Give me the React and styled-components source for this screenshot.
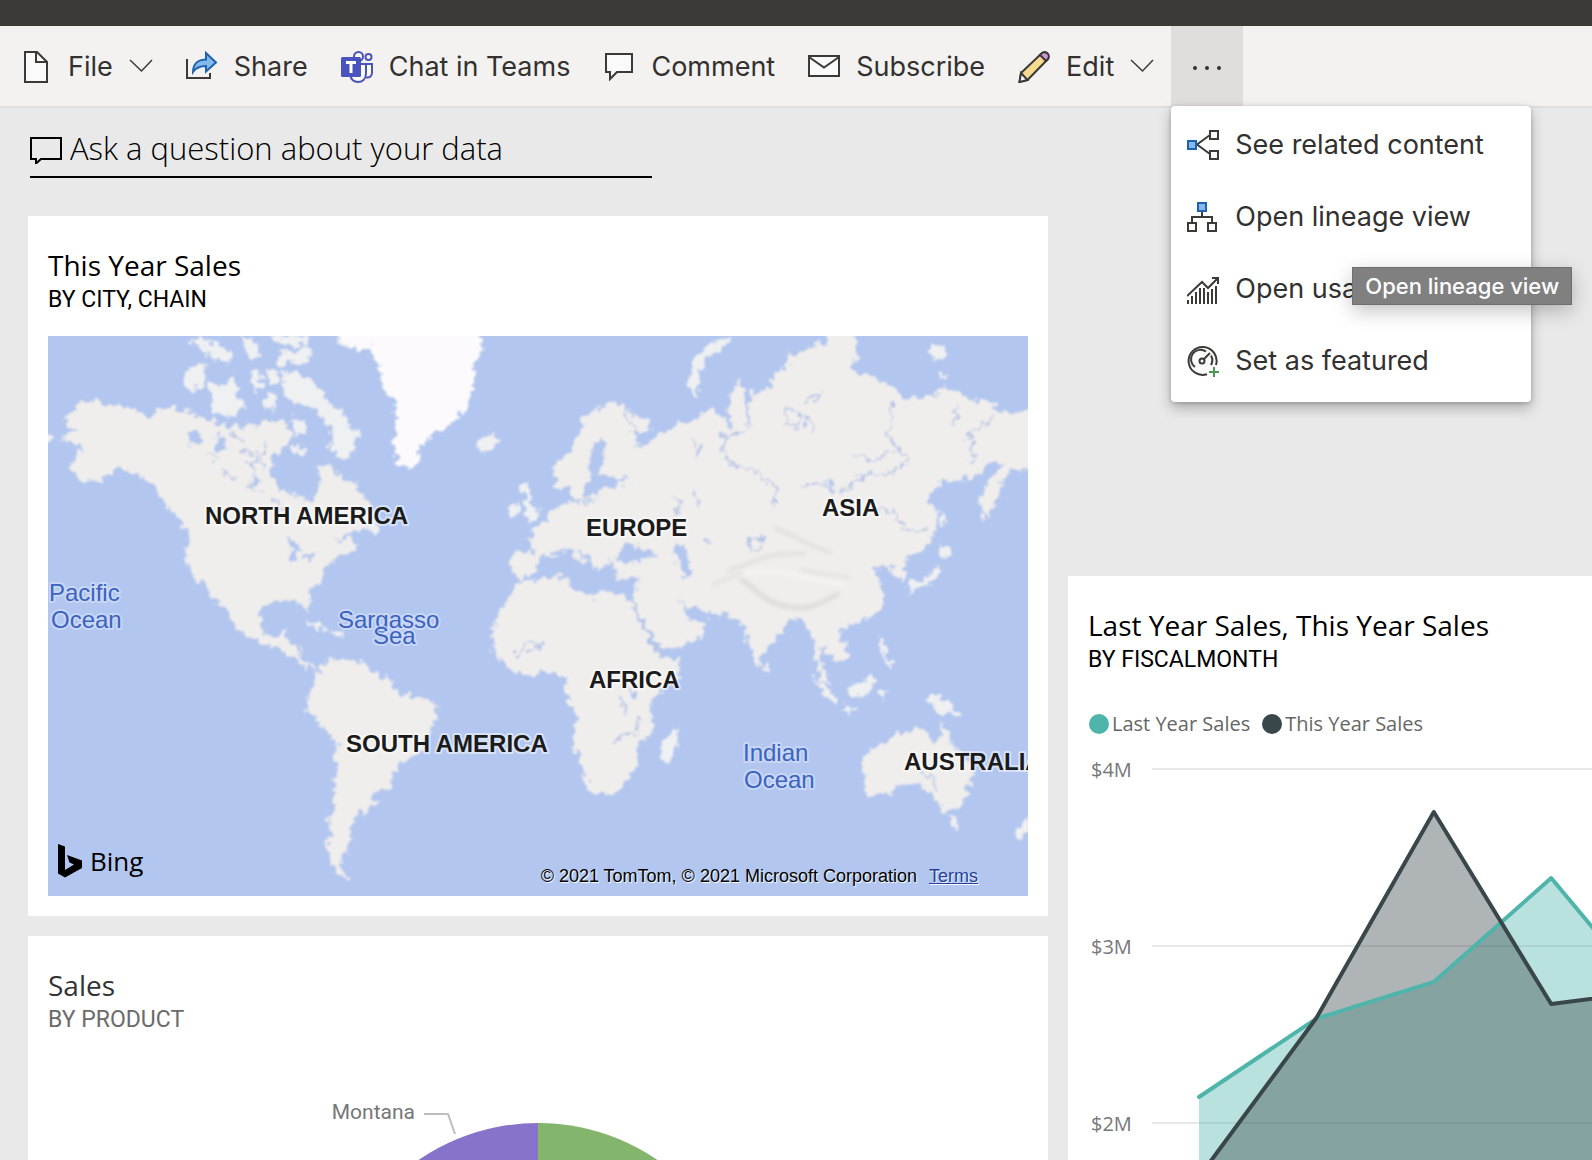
import React from "react";
import styled, { createGlobalStyle } from "styled-components";

const uiFont = `Inter, "Liberation Sans", sans-serif`;
const tileFont = `"Open Sans", "Noto Sans", sans-serif`;
const dinFont = `Roboto, "Liberation Sans", sans-serif`;
const mapFont = `"Liberation Sans", Arial, sans-serif`;

const GlobalStyle = createGlobalStyle`
  *, *::before, *::after { box-sizing: border-box; }
  body { margin: 0; background: #e9e9e9; font-family: ${uiFont}; }
  button { font: inherit; color: inherit; border: 0; background: none; padding: 0; cursor: pointer; }
`;

const Shell = styled.div`
  display: flex;
  flex-direction: column;
  height: 100vh;
  overflow: hidden;
`;

const TopBar = styled.header`
  flex: none;
  height: 26px;
  background: #3b3a37;
`;

const Toolbar = styled.nav`
  flex: none;
  display: flex;
  gap: 1px;
  height: 82px;
  padding-left: 4px;
  background: #f3f2f1;
  border-bottom: 2px solid #dedede;
`;

const ToolButton = styled.button`
  display: flex;
  align-items: center;
  gap: 16px;
  padding: 2px 16px 0;
  font-size: 27px;
  line-height: 36px;
  color: #323130;
  white-space: nowrap;
  svg { flex: none; }
`;

const MoreWrap = styled.div`
  position: relative;
  display: flex;
`;

const MoreButton = styled.button`
  display: flex;
  align-items: center;
  justify-content: center;
  width: 72px;
  padding-top: 4px;
  background: #dfdedd;
`;

const Menu = styled.div`
  position: absolute;
  top: 80px;
  left: 0;
  z-index: 2;
  width: 360px;
  padding: 3px 0 5px;
  background: #fff;
  border-radius: 4px;
  box-shadow: 0 6px 14px rgba(0, 0, 0, 0.26), 0 1px 4px rgba(0, 0, 0, 0.2);
`;

const MenuItem = styled.button`
  display: flex;
  align-items: center;
  gap: 16px;
  width: 100%;
  height: 72px;
  padding: 0 16px;
  overflow: hidden;
  font-size: 27px;
  line-height: 36px;
  color: #323130;
  white-space: nowrap;
`;

const Tooltip = styled.div`
  position: absolute;
  top: 241px;
  left: 181px;
  z-index: 3;
  width: 220px;
  height: 38px;
  border: 1px solid #6f6f6f;
  background: #808080;
  color: #fff;
  font-size: 22px;
  font-weight: 500;
  line-height: 36px;
  text-align: center;
  white-space: nowrap;
  box-shadow: 0 6px 20px rgba(0, 0, 0, 0.24);
`;

const Main = styled.main`
  flex: 1;
  min-height: 0;
  overflow: auto;
  scrollbar-width: none;
`;

const Question = styled.label`
  display: flex;
  align-items: center;
  gap: 8px;
  width: 622px;
  max-width: calc(100% - 60px);
  height: 70px;
  margin: 0 30px 38px;
  padding-top: 12px;
  border-bottom: 2px solid #000;
`;

const QuestionInput = styled.input`
  flex: 1;
  min-width: 0;
  padding: 0;
  border: 0;
  outline: 0;
  background: transparent;
  font-family: ${tileFont};
  font-size: 31px;
  font-weight: 300;
  line-height: 40px;
  color: #000;
  &::placeholder { color: #000; opacity: 1; }
`;

const Board = styled.div`
  display: grid;
  grid-template-columns: minmax(0, 255fr) minmax(0, 131fr);
  grid-auto-rows: 340px;
  gap: 20px;
  padding-left: 28px;
`;

const Tile = styled.section`
  grid-column: ${(p) => p.$column};
  grid-row: ${(p) => p.$row} / span 2;
  padding: 32px ${(p) => (p.$flush ? 0 : 20)}px 20px 20px;
  background: #fff;
  overflow: hidden;
`;

const TileHeader = styled.div`
  display: grid;
  gap: 4px;
  margin-bottom: 22px;
`;

const TileTitle = styled.h2`
  margin: 0;
  font-family: ${tileFont};
  font-size: 28px;
  font-weight: 400;
  line-height: 34px;
  color: ${(p) => (p.$muted ? "#333" : "#000")};
`;

const TileSubtitle = styled.p`
  margin: 0;
  font-family: ${dinFont};
  font-size: 23px;
  line-height: 28px;
  color: ${(p) => (p.$muted ? "#6b6b6b" : "#000")};
`;

const MapFrame = styled.div`
  position: relative;
  overflow: hidden;
  background: #b2c6ef;
`;

const Drawing = styled.svg`
  display: block;
  width: 100%;
  height: auto;
`;

const MapLabel = styled.text`
  font-family: ${mapFont};
  font-size: 24px;
  font-weight: ${(p) => (p.$water ? 400 : 700)};
  fill: ${(p) => (p.$water ? "#3b63bf" : "#1b1b1b")};
  stroke: ${(p) => (p.$water ? "rgba(215, 226, 250, 0.6)" : "rgba(255, 255, 255, 0.5)")};
  stroke-width: 4px;
  stroke-linejoin: round;
  paint-order: stroke;
`;

const BingMark = styled.div`
  position: absolute;
  left: 10px;
  bottom: 15px;
  display: flex;
  align-items: center;
  gap: 6px;
  font-family: ${tileFont};
  font-size: 26px;
  line-height: 40px;
  color: #000;
`;

const Attribution = styled.div`
  position: absolute;
  right: 50px;
  bottom: 8px;
  display: flex;
  gap: 12px;
  font-family: ${mapFont};
  font-size: 18px;
  line-height: 24px;
  color: #000;
  text-shadow: 1px 1px 1px #fff;
  a { color: #233f9b; }
`;

const ChartLabel = styled.text`
  font-family: ${(p) => (p.$din ? dinFont : tileFont)};
  font-size: ${(p) => (p.$din ? 21 : 20)}px;
  fill: #777;
`;

const Legend = styled.ul`
  display: flex;
  gap: 12px;
  height: 32px;
  margin: 34px 0 0;
  padding: 0 0 0 1px;
  list-style: none;
`;

const LegendItem = styled.li`
  display: flex;
  align-items: center;
  gap: 3px;
  font-family: ${tileFont};
  font-size: 20px;
  line-height: 28px;
  color: #666;
  white-space: nowrap;
`;

const LegendDot = styled.span`
  width: 20px;
  height: 20px;
  border-radius: 50%;
  background: ${(p) => p.$color};
`;

const ChartArea = styled.svg`
  display: block;
  width: 100%;
  height: 536px;
`;

const Icon = ({ size = 32, children }) => (
  <svg width={size} height="32" viewBox={`0 0 ${size} 32`} fill="none" stroke="#3b3a39" strokeWidth="2" aria-hidden="true">
    {children}
  </svg>
);

const FileIcon = () => (
  <Icon>
    <path d="M5 1H17L27 11V31H5Z" fill="#fafafa" />
    <path d="M16 1V11H27" />
  </Icon>
);

const ShareIcon = () => (
  <Icon>
    <path d="M1 8V27H24V22" />
    <path d="M7 21C7 13 12 8.500 20 8.500V2L30 11.500L20 20.500V15C14 15 10 16.500 7 21Z" fill="#83b9eb" stroke="#1f63b0" />
  </Icon>
);

const TeamsIcon = () => (
  <Icon>
    <g stroke="#4b53bc">
      <circle cx="17.500" cy="5.500" r="4.500" fill="#fafafa" />
      <circle cx="27.500" cy="6" r="3" fill="#fafafa" />
      <path d="M23 13H31V21.500C31 25 29 27 25 26.500" fill="#fafafa" />
      <path d="M10 13H25V22C25 28 21.500 31 17 31S10 28 9 24" fill="#fafafa" />
    </g>
    <rect x="0" y="6" width="20" height="20" rx="1.500" fill="#4b53bc" stroke="none" />
    <path d="M5 11.500H15M10 11.500V22" stroke="#fff" strokeWidth="3" />
  </Icon>
);

const CommentIcon = () => (
  <Icon>
    <path d="M3 3H29V21H14L7 28V21H3Z" fill="#fafafa" />
  </Icon>
);

const MailIcon = () => (
  <Icon>
    <path d="M1 5H31V25H1Z" fill="#fafafa" />
    <path d="M1 6L16 16.500L31 6" />
  </Icon>
);

const PencilIcon = () => (
  <Icon>
    <path d="M3 22L23.500 2.500C25 .9 27.500 .6 29.300 2.300C31.200 4 31 6.800 29.500 8.500L9.500 29L1.500 31Z" fill="#f7d98f" />
    <path d="M22 4L23.500 2.500C25 .9 27.500 .6 29.300 2.300C31.200 4 31 6.800 29.500 8.500L28 10Z" fill="#cf94da" />
    <path d="M3 22L9.500 29L1.500 31Z" fill="#fafafa" />
  </Icon>
);

const Chevron = () => (
  <svg width="24" height="32" viewBox="0 0 24 32" fill="none" stroke="#3b3a39" strokeWidth="1.500" aria-hidden="true">
    <path d="M1 9L12.500 20L23 9" />
  </svg>
);

const Dots = () => (
  <svg width="28" height="4" viewBox="0 0 28 4" fill="#323130" aria-hidden="true">
    <circle cx="2" cy="2" r="2" />
    <circle cx="14" cy="2" r="2" />
    <circle cx="26" cy="2" r="2" />
  </svg>
);

const RelatedIcon = () => (
  <Icon>
    <path d="M23 6L10 15.500L23 25" />
    <rect x="1" y="12" width="8" height="8" fill="#83b9eb" stroke="#1f63b0" />
    <rect x="23" y="2" width="8" height="8" fill="#fafafa" />
    <rect x="23" y="22" width="8" height="8" fill="#fafafa" />
  </Icon>
);

const LineageIcon = () => (
  <Icon>
    <path d="M15 10V16M5 21V16H25V21" />
    <rect x="11" y="2" width="8" height="8" fill="#83b9eb" stroke="#1f63b0" />
    <rect x="1" y="22" width="8" height="8" fill="#fafafa" />
    <rect x="21" y="22" width="8" height="8" fill="#fafafa" />
  </Icon>
);

const UsageIcon = () => (
  <Icon>
    <path d="M0 23L15 9L21 15L31 5M25 5H31V11" />
    <path d="M1 27V31M5 23V31M9 19V31M13 15V31M17 15V31M21 19V31M25 16V31M29 13V31" />
  </Icon>
);

const FeaturedIcon = () => (
  <Icon>
    <path d="M20 29.200A14 14 0 1 1 29 20" fill="#fafafa" />
    <path d="M8 22A9.500 9.500 0 0 1 19 6.500M24 10.500A9.500 9.500 0 0 1 24 20" />
    <circle cx="15" cy="16" r="2.500" />
    <path d="M17 14L23 8" />
    <path d="M27 22V32M22 27H32" stroke="#4c9a50" />
  </Icon>
);

const QuestionIcon = () => (
  <svg width="32" height="32" viewBox="0 0 32 32" fill="none" stroke="#000" strokeWidth="2" aria-hidden="true">
    <path d="M1 6H31V27H11L6 31.500V27H1Z" />
  </svg>
);

const BingLogo = () => (
  <svg width="26" height="34" viewBox="0 0 26 34" aria-hidden="true">
    <path d="M0 0L7 2.500V26L16 20.500L11.500 18.500L9 11L24 16.500V24L7 33.500L0 29.500Z" />
  </svg>
);

const continents = [
  "62,420 74,408 90,400 114,405 134,410 150,420 156,412 172,408 190,412 207,420 230,427 253,425 273,420 287,422 292,437 283,448 273,457 270,473 277,487 297,495 308,502 317,497 320,484 317,467 321,463 333,467 340,480 355,483 363,500 376,516 368,528 345,533 336,541 350,539 357,545 351,552 337,557 323,570 322,580 307,593 309,613 302,604 287,600 273,602 262,605 259,620 265,633 275,638 283,630 288,628 287,643 299,647 299,657 307,665 315,668 306,668 293,657 277,647 260,642 240,632 233,620 220,603 207,587 193,577 186,563 187,530 178,517 163,500 153,483 137,473 117,468 100,480 83,480 68,467 80,453 80,443 60,440 79,430",
  "320,667 330,658 342,660 360,660 373,672 390,680 397,693 427,700 438,708 430,730 420,753 400,763 387,790 373,792 375,803 360,813 350,827 351,843 342,857 341,867 349,882 333,869 328,850 330,827 335,783 338,743 327,733 313,713 307,703 313,687",
  "513,587 523,582 553,577 567,577 570,588 593,598 600,590 627,597 633,610 647,637 660,657 682,658 678,677 650,700 652,730 637,747 637,760 630,777 613,794 592,795 582,770 573,743 577,717 567,697 565,678 550,672 517,675 500,660 492,650 493,637 495,617 507,603",
  "557,485 552,467 570,453 580,427 587,415 607,403 623,402 627,413 647,420 653,430 645,436 632,428 637,447 650,443 663,433 673,427 688,422 710,410 723,417 733,432 729,405 732,392 740,380 745,400 748,435 752,400 750,392 770,390 770,377 787,370 790,357 807,347 827,345 828,330 850,330 858,342 858,357 847,367 857,375 873,375 890,387 903,400 923,398 937,393 943,385 957,390 967,400 990,400 995,412 1023,412 1034,407 1034,467 1010,470 1001,483 997,500 985,520 980,500 990,480 1005,463 990,463 973,477 943,480 933,490 925,502 937,510 935,530 923,550 910,556 904,563 905,583 897,577 890,565 873,567 880,583 882,603 870,617 850,625 837,630 847,647 847,657 837,662 823,648 820,655 822,669 832,685 822,680 816,660 813,637 803,620 793,618 780,630 767,647 758,665 747,640 743,623 727,615 707,611 690,607 676,598 688,612 690,620 707,622 700,637 690,643 665,652 653,637 633,603 640,577 617,577 613,564 603,562 600,575 590,560 573,547 587,563 581,562 570,550 560,550 540,558 535,573 523,578 512,573 513,553 533,553 530,532 547,520 557,510 563,500 573,503 593,502 603,490 623,483 590,500 575,500 570,488",
  "862,757 887,743 895,732 905,736 917,725 925,728 927,737 938,743 943,722 950,743 967,757 973,773 963,805 943,811 930,792 920,783 903,785 890,792 872,797 865,794 867,777",
];

const islands = [
  "187,367 205,366 203,383 190,393 183,385",
  "207,380 220,387 233,377 237,397 247,407 227,417 213,410 210,397",
  "190,343 200,337 214,344 233,352 233,360 216,362 204,349",
  "242,338 256,342 260,358 250,360 246,348",
  "280,353 308,350 310,362 290,361 278,364",
  "270,336 312,336 310,345 292,346 275,342",
  "252,373 261,374 262,388 255,391",
  "267,370 280,372 277,382 270,384",
  "267,392 276,396 274,409 265,406",
  "283,373 296,371 307,380 320,387 330,407 343,413 350,430 361,433 350,457 340,457 330,447 336,438 320,413 307,403 292,402 284,393",
  "293,415 302,420 304,434 295,432",
  "292,444 303,448 302,456 292,450",
  "334,340 360,332 356,346 345,347",
  "368,525 377,524 380,533 370,531",
  "477,447 483,437 495,437 497,445 483,453",
  "522,483 528,485 530,497 540,515 533,522 525,520 527,507 522,493",
  "510,510 518,503 520,512 512,517",
  "680,728 673,757 667,765 662,757 663,740 673,734",
  "848,687 860,683 872,672 873,683 867,698 852,695",
  "811,674 823,684 837,699 837,706 825,695",
  "842,707 858,710 858,713 842,711",
  "876,693 886,688 884,700 879,697",
  "923,697 940,698 953,708 963,717 950,714 940,713 933,705",
  "880,635 884,640 884,648 890,658 896,666 890,668 880,648",
  "765,664 769,667 768,672 764,670",
  "938,563 940,573 934,582 921,587 910,592 908,585 927,579",
  "942,546 951,551 944,556 939,554",
  "941,510 946,520 944,530 941,526",
  "734,336 722,346 707,355 699,373 697,399 689,387 693,363 707,346",
  "928,348 940,345 948,352 944,359 932,359",
  "940,371 947,375 942,380",
  "1029,815 1030,826 1020,841 1014,835",
  "949,817 959,817 955,829",
  "305,621 318,625 328,630 318,630",
  "331,631 341,633 339,636 331,635",
  "40,433 54,436 50,443 40,443",
];

const inlandWater = [
  "601,438 592,450 588,465 589,478 582,497 588,500 601,489 620,484 632,480 618,478 601,474 601,458 606,444",
  "617,560 622,547 633,543 640,548 650,551 657,557 640,561 623,562",
  "673,540 685,545 692,575 685,579 677,560",
  "187,433 198,432 203,440 192,446",
  "213,440 223,436 226,450 216,449",
  "286,539 298,543 304,552 297,549 295,561 290,561 291,549",
  "302,557 316,552 314,557 303,562",
  "252,478 257,476 259,485 253,486",
  "828,482 834,483 835,497 829,492",
  "630,689 636,689 635,697 629,696",
];

const rivers = [
  "M724 435C722 450 725 462 740 468C755 465 770 483 778 492L773 505",
  "M745 432L725 436M840 493C850 485 862 475 868 472C880 480 897 470 907 462C905 445 892 450 882 455C872 467 860 455 853 455",
  "M893 400C890 420 885 440 900 452M957 403C958 415 955 422 950 426",
  "M993 417C985 425 966 430 970 442C980 455 970 460 969 465",
  "M880 509C890 508 899 515 900 523C910 535 920 532 927 528",
  "M803 485C815 484 825 480 830 490M805 400C815 400 820 395 825 388M786 408L800 412L798 430L788 425Z",
  "M805 415L813 432M748 540L762 538L762 548L750 549ZM700 540L712 541M690 438L700 448L695 460",
  "M515 655L530 642L540 641L537 650L528 650M620 697L627 715M635 715L638 730M615 742L624 735L636 735",
  "M633 603L648 637L662 654M240 450L258 455L252 478M220 470L236 480M268 440L262 460M250 485L262 492M230 435L244 440M245 462L262 466M206 452L216 460M272 498L284 510",
  "M700 505L695 490M625 413L633 432M672 495L680 500L677 515M920 770L935 778M930 780L937 788",
];

const mapLabels = [
  { x: 205, y: 524, text: "NORTH AMERICA" },
  { x: 586, y: 536, text: "EUROPE" },
  { x: 822, y: 516, text: "ASIA" },
  { x: 589, y: 688, text: "AFRICA" },
  { x: 346, y: 752, text: "SOUTH AMERICA" },
  { x: 904, y: 770, text: "AUSTRALIA" },
  { x: 49, y: 601, text: "Pacific", water: true },
  { x: 51, y: 628, text: "Ocean", water: true },
  { x: 338, y: 628, text: "Sargasso", water: true },
  { x: 373, y: 644, text: "Sea", water: true },
  { x: 743, y: 761, text: "Indian", water: true },
  { x: 744, y: 788, text: "Ocean", water: true },
];

const WorldMap = () => (
  <Drawing viewBox="48 336 980 560" role="img" aria-label="World map of sales">
    <defs>
      <filter id="coast" x="40" y="326" width="1000" height="580" filterUnits="userSpaceOnUse">
        <feTurbulence type="fractalNoise" baseFrequency="0.13" numOctaves="3" seed="4" result="noise" />
        <feDisplacementMap in="SourceGraphic" in2="noise" scale="15" xChannelSelector="R" yChannelSelector="G" />
        <feGaussianBlur stdDeviation="0.9" />
      </filter>
      <filter id="relief" x="680" y="510" width="220" height="120" filterUnits="userSpaceOnUse">
        <feGaussianBlur stdDeviation="2.2" />
      </filter>
    </defs>
    <rect x="48" y="336" width="980" height="560" fill="#b2c6ef" />
    <g filter="url(#coast)">
      {continents.map((points) => (
        <polygon key={points} points={points} fill="#f0eeec" stroke="#e8e7ec" strokeWidth="1" />
      ))}
      {islands.map((points) => (
        <polygon key={points} points={points} fill="#eff0f1" stroke="#eff0f1" strokeWidth="1" />
      ))}
      <polygon
        points="335,330 350,347 370,347 377,363 383,387 393,400 395,420 393,437 398,463 407,468 417,465 420,447 440,430 467,410 473,387 473,363 482,350 477,330"
        fill="#fcfafc"
      />
      {inlandWater.map((points) => (
        <polygon key={points} points={points} fill="#b2c6ef" />
      ))}
      {rivers.map((d) => (
        <path key={d} d={d} fill="none" stroke="#b4c3e6" strokeWidth="2" />
      ))}
    </g>
    <g filter="url(#relief)" fill="none" strokeLinecap="round">
      <path d="M742 580C758 590 765 606 800 608C815 608 825 600 838 594" stroke="#dad8d5" strokeWidth="4" />
      <path d="M728 570C750 566 765 550 805 554M775 528C795 535 805 545 830 552" stroke="#dddbd9" strokeWidth="3" />
      <path d="M745 574C770 565 800 578 845 585" stroke="#f5f4f2" strokeWidth="4" />
      <path d="M712 585L742 573M800 570L850 578" stroke="#e2e0de" strokeWidth="3" />
    </g>
    {mapLabels.map(({ x, y, text, water }) => (
      <MapLabel key={text + x} x={x} y={y} $water={water}>
        {text}
      </MapLabel>
    ))}
  </Drawing>
);

const SalesPie = () => (
  <Drawing viewBox="0 0 980 560" role="img" aria-label="Sales by product">
    <path d="M490 278V67A211 211 0 0 1 701 278Z" fill="#83b56c" />
    <path d="M490 278H279A211 211 0 0 1 490 67Z" fill="#8873cb" />
    <path d="M279 278H701A211 211 0 0 1 279 278Z" fill="#4fb5aa" />
    <path d="M376 58H400L407 78" fill="none" stroke="#bdbdbd" strokeWidth="2" />
    <ChartLabel $din x="367" y="63" textAnchor="end">
      Montana
    </ChartLabel>
  </Drawing>
);

const lastYear = [2.147, 2.59, 2.797, 3.384, 2.588];
const thisYear = [1.695, 2.593, 3.757, 2.672, 2.757];
const gridTop = 29;
const millionStep = 177;
const monthStep = 117.4;
const firstMonth = 111;

const toPoints = (series) =>
  series.map((value, i) => `${firstMonth + i * monthStep},${gridTop + (4 - value) * millionStep}`).join(" ");
const toArea = (series) =>
  `${firstMonth},560 ${toPoints(series)} ${firstMonth + (series.length - 1) * monthStep},560`;

const SalesTrend = () => (
  <ChartArea role="img" aria-label="Last year sales and this year sales by fiscal month">
    {[4, 3, 2].map((million, i) => (
      <g key={million}>
        <rect x="64" y={gridTop + i * millionStep - 1} width="100%" height="2" fill="#e8e8e8" />
        <ChartLabel x="3" y={gridTop + i * millionStep + 8}>{`$${million}M`}</ChartLabel>
      </g>
    ))}
    <polygon points={toArea(lastYear)} fill="#4fb5aa" fillOpacity="0.4" />
    <polygon points={toArea(thisYear)} fill="#374649" fillOpacity="0.4" />
    <g fill="none" strokeWidth="4" strokeLinecap="round" strokeLinejoin="round">
      <polyline points={toPoints(lastYear)} stroke="#4fb5aa" />
      <polyline points={toPoints(thisYear)} stroke="#3a474a" />
    </g>
  </ChartArea>
);

const tools = [
  { label: "File", icon: FileIcon, expandable: true },
  { label: "Share", icon: ShareIcon },
  { label: "Chat in Teams", icon: TeamsIcon },
  { label: "Comment", icon: CommentIcon },
  { label: "Subscribe", icon: MailIcon },
  { label: "Edit", icon: PencilIcon, expandable: true },
];

const menuItems = [
  { label: "See related content", icon: RelatedIcon },
  { label: "Open lineage view", icon: LineageIcon },
  { label: "Open usage", icon: UsageIcon },
  { label: "Set as featured", icon: FeaturedIcon },
];

const TileHeading = ({ title, subtitle, muted }) => (
  <TileHeader>
    <TileTitle $muted={muted}>{title}</TileTitle>
    <TileSubtitle $muted={muted}>{subtitle}</TileSubtitle>
  </TileHeader>
);

export default function App() {
  return (
    <Shell>
      <GlobalStyle />
      <TopBar />
      <Toolbar>
        {tools.map(({ label, icon: ToolIcon, expandable }) => (
          <ToolButton key={label} type="button">
            <ToolIcon />
            <span>{label}</span>
            {expandable && <Chevron />}
          </ToolButton>
        ))}
        <MoreWrap>
          <MoreButton type="button" aria-label="More options" aria-expanded="true">
            <Dots />
          </MoreButton>
          <Menu role="menu">
            {menuItems.map(({ label, icon: ItemIcon }) => (
              <MenuItem key={label} type="button" role="menuitem">
                <ItemIcon />
                <span>{label}</span>
              </MenuItem>
            ))}
          </Menu>
          <Tooltip role="tooltip">Open lineage view</Tooltip>
        </MoreWrap>
      </Toolbar>
      <Main>
        <Question>
          <QuestionIcon />
          <QuestionInput type="text" aria-label="Ask a question about your data" placeholder="Ask a question about your data" />
        </Question>
        <Board>
          <Tile $column={1} $row={1}>
            <TileHeading title="This Year Sales" subtitle="BY CITY, CHAIN" />
            <MapFrame>
              <WorldMap />
              <BingMark>
                <BingLogo />
                <span>Bing</span>
              </BingMark>
              <Attribution>
                <span>© 2021 TomTom, © 2021 Microsoft Corporation</span>
                <a href="#terms">Terms</a>
              </Attribution>
            </MapFrame>
          </Tile>
          <Tile $column={2} $row={2} $flush>
            <TileHeading title="Last Year Sales, This Year Sales" subtitle="BY FISCALMONTH" />
            <Legend>
              <LegendItem>
                <LegendDot $color="#4fb5aa" />
                Last Year Sales
              </LegendItem>
              <LegendItem>
                <LegendDot $color="#3a474a" />
                This Year Sales
              </LegendItem>
            </Legend>
            <SalesTrend />
          </Tile>
          <Tile $column={1} $row={3}>
            <TileHeading title="Sales" subtitle="BY PRODUCT" muted />
            <SalesPie />
          </Tile>
        </Board>
      </Main>
    </Shell>
  );
}
